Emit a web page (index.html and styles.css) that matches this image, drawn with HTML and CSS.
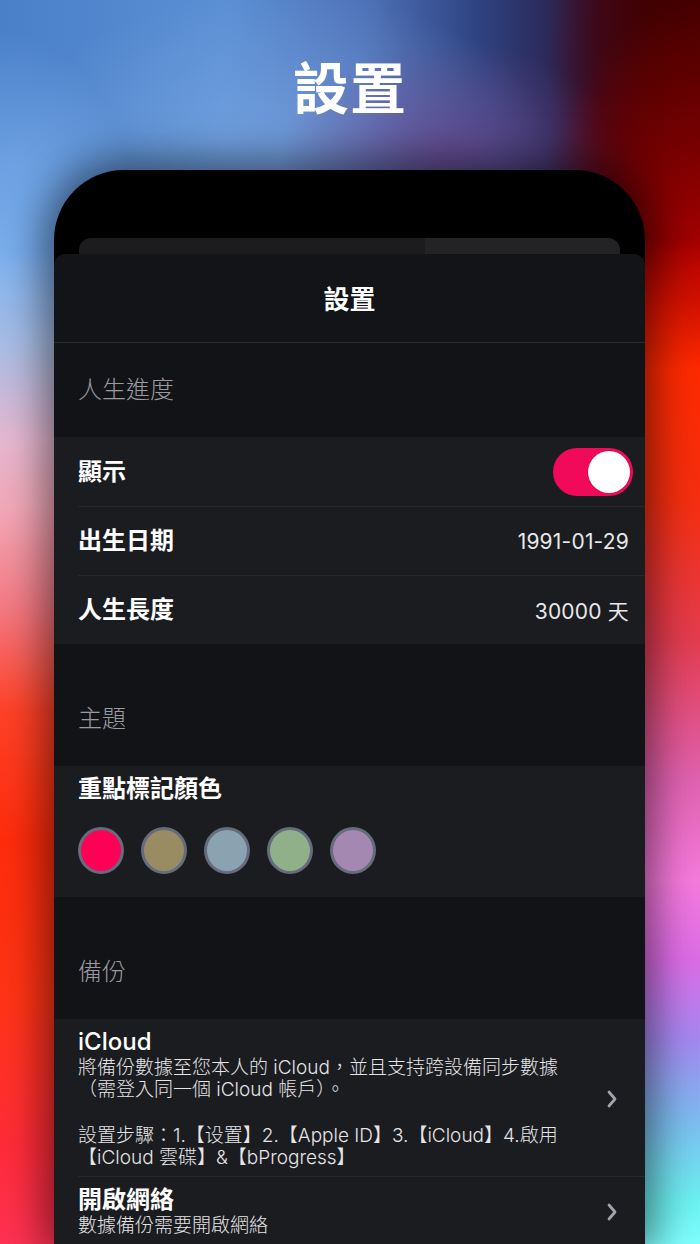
FILE: index.html
```html
<!DOCTYPE html>
<html lang="zh-Hant">
<head>
<meta charset="utf-8">
<title>設置</title>
<link rel="stylesheet" href="styles.css">
</head>
<body>
<main class="stage">
  <h1 class="hero-title">設置</h1>
  <div class="phone">
    <div class="back-card"></div>
    <section class="sheet">
      <header class="sheet-header">設置</header>

      <div class="section-header first">人生進度</div>
      <div class="group">
        <div class="row">
          <span class="label">顯示</span>
          <span class="toggle"><span class="knob"></span></span>
        </div>
        <div class="row">
          <span class="label">出生日期</span>
          <span class="value">1991-01-29</span>
        </div>
        <div class="row">
          <span class="label">人生長度</span>
          <span class="value">30000 天</span>
        </div>
      </div>

      <div class="section-header">主題</div>
      <div class="group colors-group">
        <div class="label">重點標記顏色</div>
        <div class="swatches">
          <span class="swatch swatch-pink"></span>
          <span class="swatch swatch-khaki"></span>
          <span class="swatch swatch-slate"></span>
          <span class="swatch swatch-sage"></span>
          <span class="swatch swatch-lilac"></span>
        </div>
      </div>

      <div class="section-header">備份</div>
      <div class="group">
        <div class="row nav-row icloud-row">
          <div class="nav-text">
            <div class="nav-title">iCloud</div>
            <p class="nav-desc">將備份數據至您本人的 iCloud，並且支持跨設備同步數據<br>（需登入同一個 iCloud 帳戶）。</p>
            <p class="nav-desc steps">設置步驟：1.【设置】2.【Apple ID】3.【iCloud】4.啟用<br>【iCloud 雲碟】&amp;【bProgress】</p>
          </div>
          <svg class="chevron" viewBox="0 0 10 18" width="10" height="18"><path d="M2 2 L8 9 L2 16" fill="none" stroke="#a2a2a8" stroke-width="2.8" stroke-linecap="round" stroke-linejoin="round"/></svg>
        </div>
        <div class="row nav-row net-row">
          <div class="nav-text">
            <div class="nav-title bold">開啟網絡</div>
            <p class="nav-desc">數據備份需要開啟網絡</p>
          </div>
          <svg class="chevron" viewBox="0 0 10 18" width="10" height="18"><path d="M2 2 L8 9 L2 16" fill="none" stroke="#a2a2a8" stroke-width="2.8" stroke-linecap="round" stroke-linejoin="round"/></svg>
        </div>
      </div>
    </section>
  </div>
</main>
</body>
</html>
```

FILE: styles.css
```css
* { box-sizing: border-box; }

html, body {
  margin: 0;
  padding: 0;
}

body {
  font-family: Inter, "Noto Sans CJK TC", "Noto Sans", sans-serif;
  color: #fff;
  background: #000;
}

.stage {
  width: 700px;
  height: 1244px;
  overflow: hidden;
  background:
    linear-gradient(180deg, rgba(166,189,230,0) 0px, rgba(166,189,230,0) 250px, #a6bde6 340px, #e6b8d0 440px, #f3a8b8 510px, #f47882 610px, #ff4228 710px, #ff2c0c 840px, #ff3416 1000px, #ff2c3a 1150px, #ff3252 1244px) left top / 54px 100% no-repeat,
    linear-gradient(180deg, rgba(200,10,0,0) 0px, rgba(200,10,0,0) 240px, #d01000 300px, #ff2a00 370px, #f62e10 500px, #e43c50 640px, #e062b0 780px, #f67adc 880px, #dc6ce6 960px, #a488f0 1040px, #7cbcf0 1120px, #6cf0f0 1200px, #80ffff 1244px) right top / 55px 100% no-repeat,
    radial-gradient(ellipse 150px 260px at 0px 290px, rgba(128,180,242,1), rgba(128,180,242,0.6) 50%, rgba(128,180,242,0) 100%),
    radial-gradient(ellipse 170px 280px at 100% 280px, rgba(180,0,0,1), rgba(150,0,0,0.6) 50%, rgba(120,0,0,0) 100%),
    radial-gradient(ellipse 150px 240px at 100% 60px, rgba(70,0,0,0.9), rgba(70,0,0,0.5) 55%, rgba(70,0,0,0) 100%),
    radial-gradient(ellipse 170px 120px at 450px 160px, rgba(105,70,140,0.85), rgba(105,70,140,0) 100%),
    radial-gradient(ellipse 280px 180px at 280px 170px, rgba(140,180,235,0.55), rgba(140,180,235,0) 100%),
    linear-gradient(90deg, #4a80c8 0%, #5a8fd4 32%, #4f72b8 52%, #2f4482 68%, #2c2a5a 78%, #3a0a22 86%, #3c0000 94%, #420000 100%);
}

.hero-title {
  margin: 0;
  height: 170px;
  padding-bottom: 2px;
  display: flex;
  align-items: center;
  justify-content: center;
  font-size: 56px;
  font-weight: 700;
  letter-spacing: 1px;
  color: #fff;
}

.phone {
  margin-left: 54px;
  width: 591px;
  height: 1074px;
  background: #000;
  border-radius: 70px 70px 0 0;
  padding-top: 68px;
  box-shadow: 0 0 40px 10px rgba(0,0,0,0.5);
  display: flex;
  flex-direction: column;
}

.back-card {
  height: 16px;
  margin: 0 25px;
  border-radius: 12px 12px 0 0;
  background: linear-gradient(90deg, #1c1c1f 0%, #1c1c1f 64%, #232326 64%, #232326 100%);
  flex: none;
}

.sheet {
  flex: 1;
  background: #121317;
  border-radius: 12px 12px 0 0;
  overflow: hidden;
}

.sheet-header {
  height: 89px;
  border-bottom: 1px solid #2a2b30;
  background: #131418;
  display: flex;
  align-items: center;
  justify-content: center;
  font-size: 26px;
  font-weight: 600;
  padding-bottom: 2px;
}

.section-header {
  height: 122px;
  padding: 0 0 32px 24px;
  display: flex;
  align-items: flex-end;
  font-size: 24px;
  line-height: 30px;
  font-weight: 300;
  color: #9a9aa0;
}

.section-header.first {
  height: 94px;
}

.group {
  background: #1b1c20;
  padding-left: 24px;
}

.row {
  height: 69px;
  display: flex;
  align-items: center;
  justify-content: space-between;
  padding-right: 16px;
}

.row + .row {
  border-top: 1px solid #27282d;
}

.label {
  font-size: 24px;
  font-weight: 600;
  line-height: 30px;
}

.value {
  font-size: 21px;
  color: #e8e8ea;
  letter-spacing: 0.2px;
}

.toggle {
  width: 80px;
  height: 48px;
  border-radius: 24px;
  background: #f20a5a;
  display: flex;
  align-items: center;
  justify-content: flex-end;
  padding-right: 3px;
  margin-right: -4px;
}

.knob {
  width: 42px;
  height: 42px;
  border-radius: 50%;
  background: #fff;
  box-shadow: 0 0 2px rgba(160,0,40,0.6);
}

.colors-group {
  padding-top: 8px;
  padding-bottom: 23px;
}

.swatches {
  display: flex;
  gap: 17px;
  margin-top: 23px;
}

.swatch {
  width: 46px;
  height: 47px;
  border-radius: 50%;
  border: 3px solid #656c7c;
}

.swatch-pink { background: #ff0057; }
.swatch-khaki { background: #998b62; }
.swatch-slate { background: #8ba3b1; }
.swatch-sage { background: #8fb088; }
.swatch-lilac { background: #a488b1; }

.nav-row {
  height: auto;
  padding-right: 28px;
  align-items: center;
}

.icloud-row {
  padding-top: 9px;
  padding-bottom: 7px;
}

.net-row {
  padding-top: 9px;
  padding-bottom: 8px;
}

.nav-text {
  flex: 1;
}

.nav-title {
  font-size: 24px;
  line-height: 28px;
  font-weight: 500;
}

.nav-title.bold {
  font-weight: 600;
}

.nav-desc {
  margin: 1px 0 0;
  font-size: 19px;
  line-height: 22px;
  color: #e4e4e6;
  font-weight: 300;
}

.nav-desc.steps {
  margin-top: 24px;
}

.chevron {
  flex: none;
  display: block;
}
```
